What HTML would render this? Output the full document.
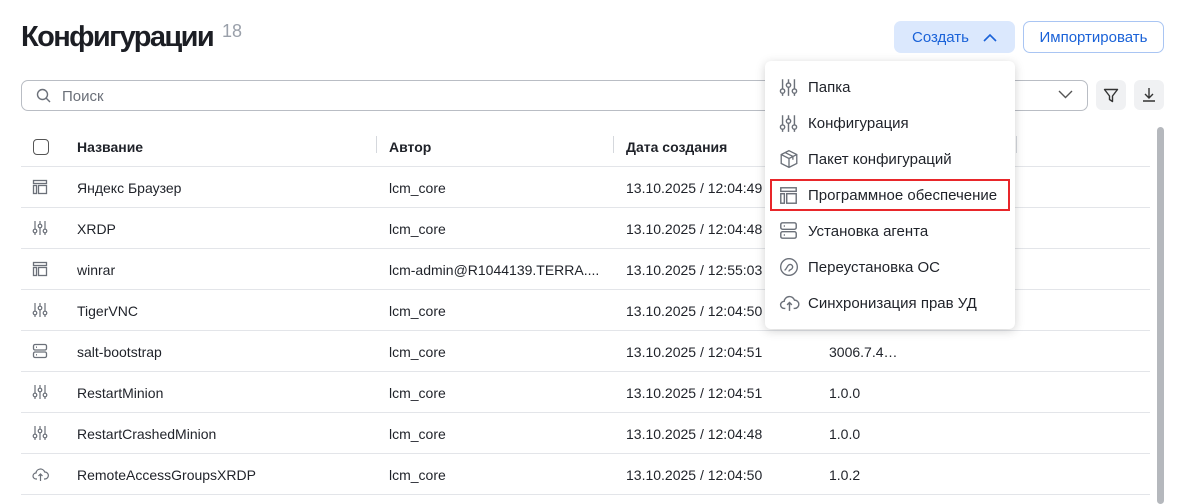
<!DOCTYPE html><html><head><meta charset="utf-8"><style>
*{box-sizing:border-box;margin:0;padding:0}
body{width:1184px;height:504px;overflow:hidden;background:#fff;font-family:"Liberation Sans",sans-serif;color:#1f2229;position:relative}
.abs{position:absolute}
h1{position:absolute;left:21px;top:21px;font-size:29px;font-weight:bold;letter-spacing:-1.6px;color:#1c1e24}
.cnt{left:222px;top:21px;font-size:18px;color:#9aa0aa}
.btn{position:absolute;top:21px;height:32px;border-radius:7px;font-size:15px;color:#1a62d8;display:flex;align-items:center;justify-content:center}
.row{position:absolute;left:21px;width:1129px;height:41px;border-bottom:1px solid #e3e5e9;font-size:14px}
.row span{position:absolute;top:13px}
.hd span{font-weight:bold;font-size:14px}
.ic{position:absolute;left:11px;top:12px}
.menu{left:765px;top:61px;width:250px;height:268px;background:#fff;border-radius:6px;box-shadow:0 2px 10px rgba(0,0,0,.18)}
.mi{position:absolute;left:43px;font-size:15px;color:#1f2229}
.mic{position:absolute;left:14px}
.div{position:absolute;top:10px;width:1px;height:17px;background:#d5d8dd}
</style></head><body>
<h1>Конфигурации</h1><div class="abs cnt">18</div>
<div class="btn" style="left:894px;width:121px;background:#dbe8fd">Создать<svg style="margin-left:14px" width="14" height="9" viewBox="0 0 14 9"><path d="M1 8L7 2l6 6" fill="none" stroke="#1a62d8" stroke-width="1.6"/></svg></div>
<div class="btn" style="left:1023px;width:141px;border:1px solid #a9c5f3">Импортировать</div>
<div class="abs" style="left:21px;top:80px;width:1067px;height:31px;border:1px solid #b9bdc4;border-radius:7px"></div>
<svg class="abs" style="left:36px;top:88px" width="15" height="15" viewBox="0 0 15 15"><circle cx="6.5" cy="6.5" r="5" fill="none" stroke="#6b7079" stroke-width="1.4"/><path d="M10 10l4 4" stroke="#6b7079" stroke-width="1.4"/></svg>
<div class="abs" style="left:62px;top:88px;font-size:15px;color:#6b7079">Поиск</div>
<svg class="abs" style="left:1058px;top:90px" width="15" height="9" viewBox="0 0 15 9"><path d="M1 1l6.5 6.5L14 1" fill="none" stroke="#555" stroke-width="1.4"/></svg>
<div class="abs" style="left:1096px;top:80px;width:30px;height:30px;background:#f0f1f3;border-radius:6px"></div>
<svg class="abs" style="left:1103px;top:88px" width="16" height="15" viewBox="0 0 16 15"><path d="M1.5 1.5h13L9.5 8v5.5L6.5 11.5V8z" fill="none" stroke="#333" stroke-width="1.4" stroke-linejoin="round"/></svg>
<div class="abs" style="left:1134px;top:80px;width:30px;height:30px;background:#f0f1f3;border-radius:6px"></div>
<svg class="abs" style="left:1141px;top:87px" width="16" height="16" viewBox="0 0 16 16"><path d="M8 1v10M4 7l4 4 4-4M2 14h12" fill="none" stroke="#333" stroke-width="1.4"/></svg>
<div class="abs" style="left:1157px;top:127px;width:7px;height:377px;background:#b5b8bd;border-radius:4px"></div>

<div class="row hd" style="top:126px"><div class="abs" style="left:12px;top:13px;width:16px;height:16px;border:1.5px solid #555;border-radius:4px"></div><span style="left:56px">Название</span><div class="div" style="left:355px"></div><span style="left:368px">Автор</span><div class="div" style="left:592px"></div><span style="left:605px">Дата создания</span><div class="div" style="left:995px"></div></div>
<div class="row" style="top:167px"><svg class="ic" width="16" height="16" viewBox="0 0 16 16" fill="none" stroke="#6b7079" stroke-width="1.3"><rect x="1.5" y="1.5" width="13" height="3"/><rect x="1.5" y="6.5" width="3" height="8"/><rect x="6.5" y="6.5" width="8" height="8"/></svg><span style="left:56px">Яндекс Браузер</span><span style="left:368px">lcm_core</span><span style="left:605px">13.10.2025 / 12:04:49</span></div>
<div class="row" style="top:208px"><svg class="ic" width="16" height="16" viewBox="0 0 16 16" fill="none" stroke="#6b7079" stroke-width="1.2"><path d="M3 1v8M8 1v3M13 1v8M3 13v2M8 8v7M13 13v2"/><circle cx="3" cy="11" r="1.8"/><circle cx="8" cy="6" r="1.8"/><circle cx="13" cy="11" r="1.8"/></svg><span style="left:56px">XRDP</span><span style="left:368px">lcm_core</span><span style="left:605px">13.10.2025 / 12:04:48</span></div>
<div class="row" style="top:249px"><svg class="ic" width="16" height="16" viewBox="0 0 16 16" fill="none" stroke="#6b7079" stroke-width="1.3"><rect x="1.5" y="1.5" width="13" height="3"/><rect x="1.5" y="6.5" width="3" height="8"/><rect x="6.5" y="6.5" width="8" height="8"/></svg><span style="left:56px">winrar</span><span style="left:368px">lcm-admin@R1044139.TERRA....</span><span style="left:605px">13.10.2025 / 12:55:03</span></div>
<div class="row" style="top:290px"><svg class="ic" width="16" height="16" viewBox="0 0 16 16" fill="none" stroke="#6b7079" stroke-width="1.2"><path d="M3 1v8M8 1v3M13 1v8M3 13v2M8 8v7M13 13v2"/><circle cx="3" cy="11" r="1.8"/><circle cx="8" cy="6" r="1.8"/><circle cx="13" cy="11" r="1.8"/></svg><span style="left:56px">TigerVNC</span><span style="left:368px">lcm_core</span><span style="left:605px">13.10.2025 / 12:04:50</span></div>
<div class="row" style="top:331px"><svg class="ic" width="16" height="16" viewBox="0 0 16 16" fill="none" stroke="#6b7079" stroke-width="1.3"><rect x="1.5" y="1.5" width="13" height="5.5" rx="1.5"/><rect x="1.5" y="9" width="13" height="5.5" rx="1.5"/><path d="M4 4.2h1M4 11.8h1"/></svg><span style="left:56px">salt-bootstrap</span><span style="left:368px">lcm_core</span><span style="left:605px">13.10.2025 / 12:04:51</span><span style="left:808px">3006.7.4…</span></div>
<div class="row" style="top:372px"><svg class="ic" width="16" height="16" viewBox="0 0 16 16" fill="none" stroke="#6b7079" stroke-width="1.2"><path d="M3 1v8M8 1v3M13 1v8M3 13v2M8 8v7M13 13v2"/><circle cx="3" cy="11" r="1.8"/><circle cx="8" cy="6" r="1.8"/><circle cx="13" cy="11" r="1.8"/></svg><span style="left:56px">RestartMinion</span><span style="left:368px">lcm_core</span><span style="left:605px">13.10.2025 / 12:04:51</span><span style="left:808px">1.0.0</span></div>
<div class="row" style="top:413px"><svg class="ic" width="16" height="16" viewBox="0 0 16 16" fill="none" stroke="#6b7079" stroke-width="1.2"><path d="M3 1v8M8 1v3M13 1v8M3 13v2M8 8v7M13 13v2"/><circle cx="3" cy="11" r="1.8"/><circle cx="8" cy="6" r="1.8"/><circle cx="13" cy="11" r="1.8"/></svg><span style="left:56px">RestartCrashedMinion</span><span style="left:368px">lcm_core</span><span style="left:605px">13.10.2025 / 12:04:48</span><span style="left:808px">1.0.0</span></div>
<div class="row" style="top:454px"><svg class="ic" width="17" height="16" viewBox="0 0 17 16" fill="none" stroke="#6b7079" stroke-width="1.2"><path d="M5 13H4a3 3 0 010-6 4.5 4.5 0 018.7-1A3 3 0 0113 13h-1M8.5 8v7M6.5 10l2-2 2 2"/></svg><span style="left:56px">RemoteAccessGroupsXRDP</span><span style="left:368px">lcm_core</span><span style="left:605px">13.10.2025 / 12:04:50</span><span style="left:808px">1.0.2</span></div>

<div class="abs menu">
<svg class="mic" style="top:17px" width="19" height="19" viewBox="0 0 16 16" fill="none" stroke="#6b7079" stroke-width="1.2"><path d="M3 1v8M8 1v3M13 1v8M3 13v2M8 8v7M13 13v2"/><circle cx="3" cy="11" r="1.8"/><circle cx="8" cy="6" r="1.8"/><circle cx="13" cy="11" r="1.8"/></svg><div class="mi" style="top:18px">Папка</div>
<svg class="mic" style="top:53px" width="19" height="19" viewBox="0 0 16 16" fill="none" stroke="#6b7079" stroke-width="1.2"><path d="M3 1v8M8 1v3M13 1v8M3 13v2M8 8v7M13 13v2"/><circle cx="3" cy="11" r="1.8"/><circle cx="8" cy="6" r="1.8"/><circle cx="13" cy="11" r="1.8"/></svg><div class="mi" style="top:54px">Конфигурация</div>
<svg class="mic" style="top:88px" width="20" height="20" viewBox="0 0 18 18" fill="none" stroke="#6b7079" stroke-width="1.2"><path d="M9 1.5l7 3.5v8l-7 3.5-7-3.5V5zM2 5l7 3.5L16 5M9 8.5v8M5.5 3.2l7 3.5v3"/></svg><div class="mi" style="top:90px">Пакет конфигураций</div>
<div class="abs" style="left:5px;top:118px;width:240px;height:32px;border:2px solid #e8262a"></div>
<svg class="mic" style="top:125px" width="19" height="19" viewBox="0 0 16 16" fill="none" stroke="#6b7079" stroke-width="1.2"><rect x="1.5" y="1.5" width="13" height="3"/><rect x="1.5" y="6.5" width="3" height="8"/><rect x="6.5" y="6.5" width="8" height="8"/></svg><div class="mi" style="top:126px">Программное обеспечение</div>
<svg class="mic" style="top:160px" width="19" height="19" viewBox="0 0 16 16" fill="none" stroke="#6b7079" stroke-width="1.2"><rect x="1.5" y="1.5" width="13" height="5.5" rx="1.5"/><rect x="1.5" y="9" width="13" height="5.5" rx="1.5"/><path d="M4 4.2h1M4 11.8h1"/></svg><div class="mi" style="top:162px">Установка агента</div>
<svg class="mic" style="top:196px" width="20" height="20" viewBox="0 0 18 18" fill="none" stroke="#6b7079" stroke-width="1.2"><circle cx="9" cy="9" r="7.5"/><path d="M5 12c2-1 2-4 4-5s4 1 3 3-3 1-3 3"/></svg><div class="mi" style="top:198px">Переустановка ОС</div>
<svg class="mic" style="top:232px" width="21" height="19" viewBox="0 0 17 16" fill="none" stroke="#6b7079" stroke-width="1.2"><path d="M5 13H4a3 3 0 010-6 4.5 4.5 0 018.7-1A3 3 0 0113 13h-1M8.5 8v7M6.5 10l2-2 2 2"/></svg><div class="mi" style="top:234px">Синхронизация прав УД</div>
</div>
</body></html>
